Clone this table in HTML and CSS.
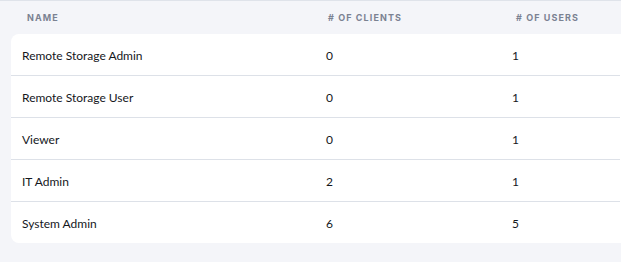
FILE: index.html
```html
<!DOCTYPE html>
<html>
<head>
<meta charset="utf-8">
<link rel="stylesheet" href="styles.css">
</head>
<body>
<div class="page">
  <div class="head">
    <div class="hcell">NAME</div>
    <div class="hcell">#&nbsp;OF CLIENTS</div>
    <div class="hcell">#&nbsp;OF USERS</div>
  </div>
  <div class="card">
    <div class="row"><div>Remote Storage Admin</div><div>0</div><div>1</div></div>
    <div class="row"><div>Remote Storage User</div><div>0</div><div>1</div></div>
    <div class="row"><div>Viewer</div><div>0</div><div>1</div></div>
    <div class="row"><div>IT Admin</div><div>2</div><div>1</div></div>
    <div class="row"><div>System Admin</div><div>6</div><div>5</div></div>
  </div>
</div>
</body>
</html>
```
FILE: styles.css
```css
html, body {
  margin: 0;
  padding: 0;
  background: #f4f5f9;
}
body {
  font-family: Lato, "Noto Sans", sans-serif;
  color: #15171c;
  overflow: hidden;
}
.page {
  border-top: 1px solid #dfe3ea;
  padding-left: 11px;
}
.head {
  display: grid;
  grid-template-columns: 301px 188px 1fr;
  height: 33px;
  align-items: center;
  padding-left: 16px;
}
.hcell {
  font-family: Inter, sans-serif;
  font-size: 9px;
  font-weight: 700;
  letter-spacing: 1.1px;
  color: #7b8292;
}
.card {
  background: #fff;
  border-radius: 8px 0 0 8px;
  margin-right: -10px;
  padding-right: 11px;
}
.row {
  display: grid;
  grid-template-columns: 304px 186px 1fr;
  height: 42px;
  align-items: center;
  padding-left: 11px;
  padding-top: 1px;
  box-sizing: border-box;
  font-size: 12px;
  font-weight: 400;
  border-bottom: 1px solid #dde1e8;
}
.row:last-child {
  border-bottom: none;
  height: 41px;
}
```
